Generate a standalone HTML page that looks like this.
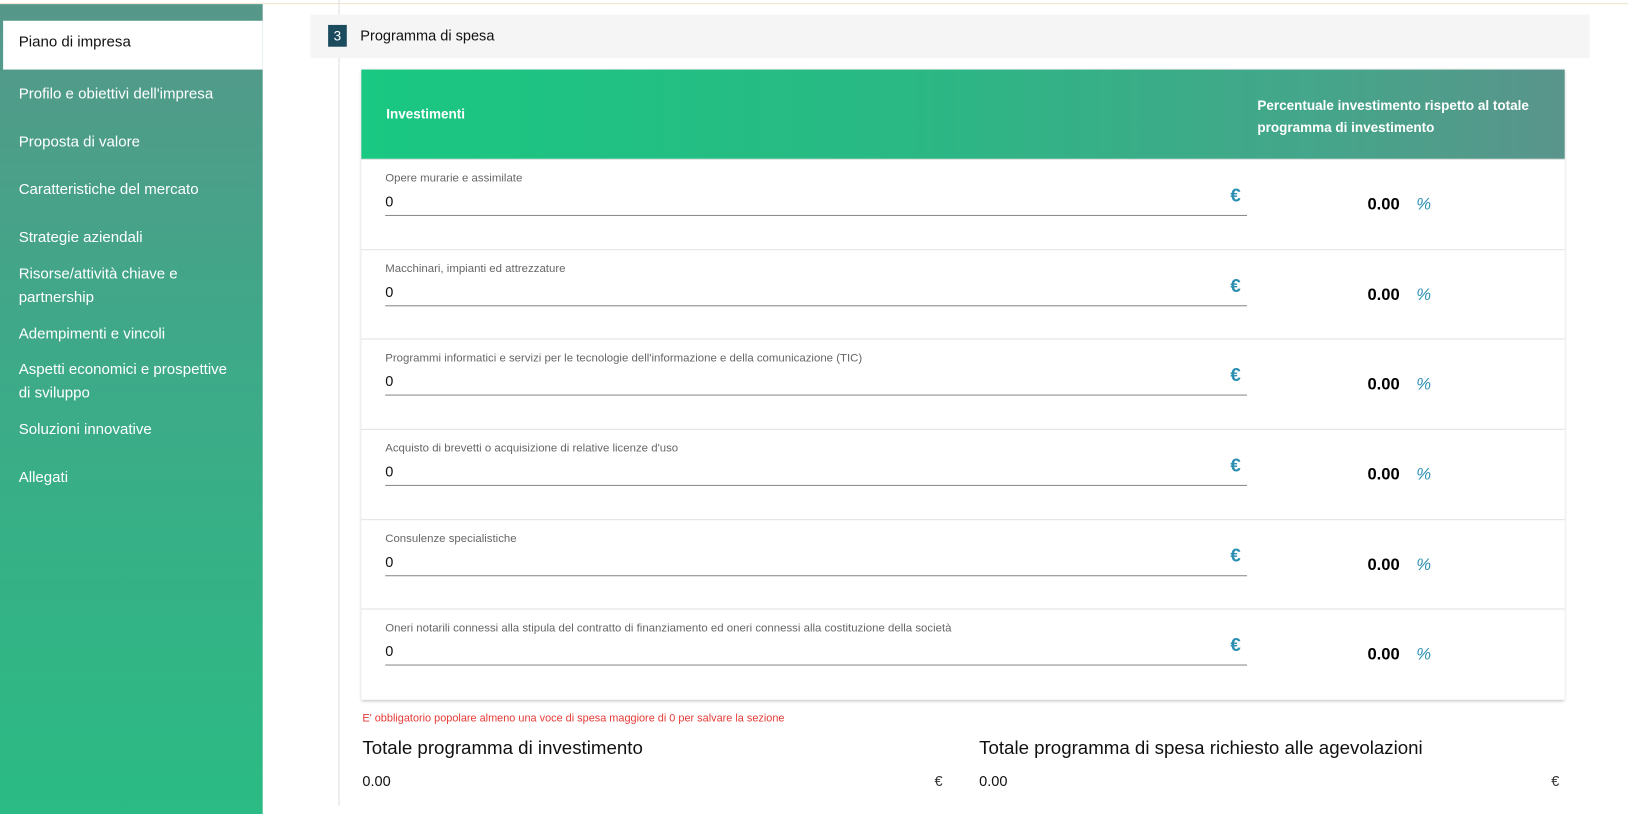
<!DOCTYPE html>
<html><head><meta charset="utf-8"><style>
*{margin:0;padding:0;box-sizing:border-box}
html,body{width:1628px;height:776px;overflow:hidden;background:#fff}
body{font-family:"Liberation Sans",sans-serif;color:#222}
#w{position:absolute;left:0;top:0;width:1568px;height:748px;transform:scale(1.0383);transform-origin:0 0}
.topline{position:absolute;left:0;top:3px;width:1568px;height:1px;background:#efe6cc}
.side{position:absolute;left:0;top:4px;width:253px;height:780px;background:linear-gradient(180deg,#56978a 0%,#3fa888 40%,#2bbb84 100%)}
.side div{position:absolute;left:18px;color:#fff;font-size:14.5px;line-height:23px}
.active{position:absolute;left:3px;top:20px;width:250px;height:47px;background:#fff}
.vline{position:absolute;left:326px;top:0;width:1px;height:776px;background:#ddd}
.sec{position:absolute;left:299px;top:14px;width:1232px;height:42px;background:#f5f5f5}
.badge{position:absolute;left:316px;top:24px;width:18px;height:21px;background:#1d4b5e;color:#fff;font-size:13px;text-align:center;line-height:21px}
.sectitle{position:absolute;left:347px;top:26px;font-size:14px;color:#111}
.card{position:absolute;left:348px;top:67px;width:1159px;height:607px;background:#fff;box-shadow:0 1px 3px rgba(0,0,0,.25)}
.head{position:absolute;left:0;top:0;width:1159px;height:86px;background:linear-gradient(90deg,#19c882 0%,#2ab884 45%,#45a58a 80%,#5a948b 100%)}
.head .a{position:absolute;left:24px;top:35px;color:#fff;font-size:13px;font-weight:bold}
.head .b{position:absolute;left:863px;top:24px;color:#fff;font-size:13px;font-weight:bold;line-height:21px}
.row{position:absolute;left:0;width:1159px;height:87px;border-top:1px solid #e2e2e2}
.row .l{position:absolute;left:23px;top:12px;font-size:11px;color:#666}
.row .v{position:absolute;left:23px;top:32px;font-size:14px;color:#111}
.row .u{position:absolute;left:23px;top:53px;width:830px;height:1px;background:#888}
.row .e{position:absolute;left:837px;top:24px;font-size:18px;font-weight:bold;color:#2a8fb0}
.row .p{position:absolute;left:969px;top:35px;font-size:16px;color:#000;font-weight:bold}
.row .pc{position:absolute;left:1016px;top:35px;font-size:16px;color:#2a8fb0;font-style:italic}
.err{position:absolute;left:349px;top:686px;font-size:10.5px;color:#e53935}
.tot{position:absolute;top:710px;font-size:18px;color:#111}
.cut{position:absolute;top:744px;font-size:14px;color:#111}
</style></head><body><div id="w">
<div class="topline"></div>
<div class="side">
<div style="top:76px">Profilo e obiettivi dell'impresa</div>
<div style="top:122px">Proposta di valore</div>
<div style="top:168px">Caratteristiche del mercato</div>
<div style="top:214px">Strategie aziendali</div>
<div style="top:249px">Risorse/attività chiave e<br>partnership</div>
<div style="top:307px">Adempimenti e vincoli</div>
<div style="top:341px">Aspetti economici e prospettive<br>di sviluppo</div>
<div style="top:399px">Soluzioni innovative</div>
<div style="top:445px">Allegati</div>
</div>
<div class="active"></div>
<div style="position:absolute;left:18px;top:33px;font-size:14.5px;color:#111">Piano di impresa</div>
<div class="vline"></div>
<div class="sec"></div>
<div class="badge">3</div>
<div class="sectitle">Programma di spesa</div>
<div class="card">
<div class="head"><div class="a">Investimenti</div><div class="b">Percentuale investimento rispetto al totale<br>programma di investimento</div></div>
<div class="row" style="top:86px"><div class="l">Opere murarie e assimilate</div><div class="v">0</div><div class="u"></div><div class="e">€</div><div class="p">0.00</div><div class="pc">%</div></div>
<div class="row" style="top:173px"><div class="l">Macchinari, impianti ed attrezzature</div><div class="v">0</div><div class="u"></div><div class="e">€</div><div class="p">0.00</div><div class="pc">%</div></div>
<div class="row" style="top:259px"><div class="l">Programmi informatici e servizi per le tecnologie dell'informazione e della comunicazione (TIC)</div><div class="v">0</div><div class="u"></div><div class="e">€</div><div class="p">0.00</div><div class="pc">%</div></div>
<div class="row" style="top:346px"><div class="l">Acquisto di brevetti o acquisizione di relative licenze d'uso</div><div class="v">0</div><div class="u"></div><div class="e">€</div><div class="p">0.00</div><div class="pc">%</div></div>
<div class="row" style="top:433px"><div class="l">Consulenze specialistiche</div><div class="v">0</div><div class="u"></div><div class="e">€</div><div class="p">0.00</div><div class="pc">%</div></div>
<div class="row" style="top:519px"><div class="l">Oneri notarili connessi alla stipula del contratto di finanziamento ed oneri connessi alla costituzione della società</div><div class="v">0</div><div class="u"></div><div class="e">€</div><div class="p">0.00</div><div class="pc">%</div></div>
</div>
<div class="err">E' obbligatorio popolare almeno una voce di spesa maggiore di 0 per salvare la sezione</div>
<div class="tot" style="left:349px">Totale programma di investimento</div>
<div class="tot" style="left:943px">Totale programma di spesa richiesto alle agevolazioni</div>
<div class="cut" style="left:349px">0.00</div>
<div class="cut" style="left:900px;color:#333">€</div>
<div class="cut" style="left:943px">0.00</div>
<div class="cut" style="left:1494px;color:#333">€</div>
</div></body></html>
